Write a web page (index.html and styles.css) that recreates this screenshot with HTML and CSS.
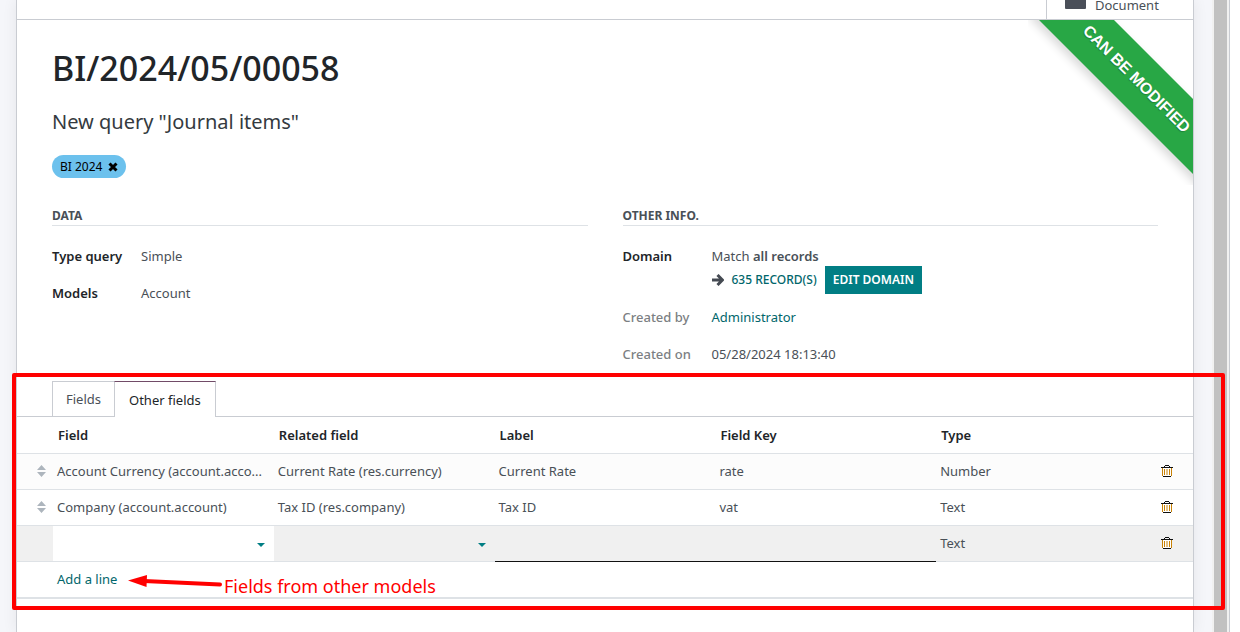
FILE: index.html
```html
<!DOCTYPE html>
<html lang="en">
<head>
<meta charset="utf-8">
<title>BI/2024/05/00058</title>
<link rel="stylesheet" href="styles.css">
</head>
<body>
<svg class="sprite" aria-hidden="true">
  <symbol id="sort" viewBox="0 0 9 12"><path d="M0 5 4.500 0 9 5zM0 7h9L4.500 12z"/></symbol>
  <symbol id="caret" viewBox="0 0 8 4"><path d="M0 0h8L4 4z"/></symbol>
  <symbol id="trash" viewBox="0 0 12 12"><path d="M2 3h8v8H2z" fill="#fff"/><path d="M1 3h1v8H1zM10 3h1v8h-1zM3 4h1v6H3zM5.500 4h1v6h-1zM8 4h1v6H8z" fill="#c98205"/><path d="M0 2h12v1H0zM2 11h8v1H2zM4 0h4v1H4zM3 1h1v1H3zM8 1h1v1H8z" fill="#111"/></symbol>
</svg>
<div class="app">
  <main class="sheet">
    <header class="statbar">
      <button class="stat" type="button">
        <svg class="stat-icon" viewBox="0 0 21 16"><rect width="21" height="16" rx="1"/></svg>
        <span>Document</span>
      </button>
    </header>
    <div class="form">
      <div class="ribbon"><span>CAN BE MODIFIED</span></div>
      <h1>BI/2024/05/00058</h1>
      <p class="subtitle">New query "Journal items"</p>
      <div class="tags">
        <span class="tag">BI 2024
          <button type="button" aria-label="Remove tag"><svg viewBox="0 0 10 10"><path d="M1.500 1.500 8.500 8.500M8.500 1.500 1.500 8.500"/></svg></button>
        </span>
      </div>
      <div class="groups">
        <section class="group">
          <h2>Data</h2>
          <dl>
            <dt>Type query</dt><dd>Simple</dd>
            <dt>Models</dt><dd>Account</dd>
          </dl>
        </section>
        <section class="group">
          <h2>Other info.</h2>
          <dl>
            <dt>Domain</dt>
            <dd class="domain">
              <div>Match <b>all records</b></div>
              <div class="domain-actions">
                <svg class="arrow" viewBox="0 0 12 12"><path d="M0 6h10M5.500 1 10.500 6 5.500 11"/></svg>
                <button class="records" type="button">635 RECORD(S)</button>
                <button class="edit" type="button">EDIT DOMAIN</button>
              </div>
            </dd>
            <dt class="muted">Created by</dt><dd><a href="#">Administrator</a></dd>
            <dt class="muted">Created on</dt><dd>05/28/2024 18:13:40</dd>
          </dl>
        </section>
      </div>
    </div>
    <section class="notebook">
      <div class="tabs" role="tablist">
        <button class="tab" type="button" role="tab">Fields</button>
        <button class="tab active" type="button" role="tab" aria-selected="true">Other fields</button>
      </div>
      <table>
        <colgroup><col class="narrow"><col><col><col><col><col><col class="narrow"></colgroup>
        <thead>
          <tr><th></th><th>Field</th><th>Related field</th><th>Label</th><th>Field Key</th><th>Type</th><th></th></tr>
        </thead>
        <tbody>
          <tr class="odd">
            <td class="handle"><svg><use href="#sort"/></svg></td>
            <td>Account Currency (account.acco...</td><td>Current Rate (res.currency)</td><td>Current Rate</td><td>rate</td><td>Number</td>
            <td><button class="trash" type="button" aria-label="Delete row"><svg><use href="#trash"/></svg></button></td>
          </tr>
          <tr>
            <td class="handle"><svg><use href="#sort"/></svg></td>
            <td>Company (account.account)</td><td>Tax ID (res.company)</td><td>Tax ID</td><td>vat</td><td>Text</td>
            <td><button class="trash" type="button" aria-label="Delete row"><svg><use href="#trash"/></svg></button></td>
          </tr>
          <tr class="editing">
            <td></td>
            <td class="field current"><div class="pick"><select aria-label="Field"><option></option></select><svg><use href="#caret"/></svg></div></td>
            <td class="field"><div class="pick"><select aria-label="Related field"><option></option></select><svg><use href="#caret"/></svg></div></td>
            <td class="field required"><input type="text" aria-label="Label"></td>
            <td class="field required"><input type="text" aria-label="Field Key"></td>
            <td>Text</td>
            <td><button class="trash" type="button" aria-label="Delete row"><svg><use href="#trash"/></svg></button></td>
          </tr>
          <tr class="add"><td></td><td colspan="6"><a href="#">Add a line</a></td></tr>
        </tbody>
      </table>
      <div class="callout"></div>
      <div class="note">
        <svg viewBox="0 0 96 14"><path d="M16 7 92 10.500" stroke="#f00" stroke-width="4" stroke-linecap="round"/><path d="M0 6.500 19 1 18.500 13z" fill="#f00"/></svg>
        <span>Fields from other models</span>
      </div>
    </section>
  </main>
</div>
<div class="scrollbar"></div>
<div class="edge"></div>
</body>
</html>
```
FILE: styles.css
```css
* { box-sizing: border-box; }
body {
  margin: 0;
  display: flex;
  height: 100vh;
  overflow: hidden;
  padding-right: 10px;
  background: #fff;
  color: #495057;
  font: 13px/20px "Noto Sans", "Open Sans", sans-serif;
}
h1, h2, p, dl, dd { margin: 0; }
button, input, select { font: inherit; color: inherit; border: 0; padding: 0; background: none; }
a { color: #01666b; text-decoration: none; }
.sprite { position: absolute; width: 0; height: 0; }

.app { flex: 1; display: flex; min-width: 0; padding: 0 18px 0 16px; background: #f5f6fa; }
.sheet {
  flex: 1;
  min-width: 0;
  background: #fff;
  border: solid #c9ccd2;
  border-width: 0 1px;
  box-shadow: 0 0 14px rgba(0, 0, 0, .07);
}
.scrollbar { width: 17px; background: #c1c1c1; border: solid #f1f1f1; border-width: 0 2px; }
.edge { width: 1px; background: #c9ccd2; }

.statbar { display: flex; justify-content: flex-end; align-items: flex-end; height: 20px; border-bottom: 1px solid #c9ccd2; }
.stat { display: flex; align-items: center; gap: 9px; width: 147px; height: 28px; padding: 0 0 0 18px; border-left: 1px solid #c9ccd2; }
.stat-icon { width: 21px; height: 16px; margin-bottom: 8px; fill: #4a4f59; }

.form { position: relative; padding: 26px 35px 0; }
h1 { font-size: 34px; line-height: 44px; font-weight: 500; color: #212529; }
.subtitle { margin-top: 16px; font-size: 20px; line-height: 32px; color: #343a40; }
.tags { display: flex; margin-top: 17px; }
.tag { display: flex; align-items: center; gap: 6px; height: 23px; padding: 0 8px; border-radius: 12px; background: #6cc1ed; color: #000; font-size: 12px; }
.tag button { display: flex; }
.tag svg { width: 10px; height: 10px; stroke: #000; stroke-width: 3; }

.ribbon { position: absolute; top: 0; right: 0; width: 165px; height: 165px; overflow: hidden; }
.ribbon span {
  position: absolute;
  top: 33px;
  left: -12px;
  width: 240px;
  height: 53px;
  transform: rotate(45deg);
  background: #28a745;
  box-shadow: 0 5px 10px rgba(0, 0, 0, .15);
  color: #fff;
  font: bold 16px/52px "Liberation Sans", sans-serif;
  text-align: center;
  text-shadow: 0 1px 1px rgba(0, 0, 0, .25);
}

.groups { display: grid; grid-template-columns: 1fr 1fr; gap: 35px; margin-top: 28px; }
h2 { font-size: 12px; line-height: 19px; font-weight: 700; text-transform: uppercase; border-bottom: 1px solid #dee2e6; }
dl { display: grid; grid-template-columns: 89px 1fr; row-gap: 17px; margin-top: 20px; }
dt { font-weight: 600; color: #212529; }
dt.muted { font-weight: 500; color: #7c7f83; }
b { font-weight: 600; }
.domain { margin-bottom: -4px; }
.domain-actions { display: flex; align-items: center; }
.arrow { width: 12px; height: 12px; margin-right: 8px; fill: none; stroke: #454a52; stroke-width: 3; }
.records { margin-right: 8px; color: #01666b; font-size: 12px; font-weight: 500; }
.edit { height: 28px; padding: 0 8px; background: #017e84; color: #fff; font-size: 12px; font-weight: 600; }

.notebook { position: relative; margin-top: 17px; }
.tabs { display: flex; padding-left: 35px; border-bottom: 1px solid #c9ccd2; }
.tab { height: 35px; padding: 0 13px; border: solid #c9ccd2; border-width: 1px 0 0 1px; }
.tab.active { height: 36px; padding: 0 14px; margin-bottom: -1px; border-right-width: 1px; border-top-color: #714b67; background: #fff; color: #212529; }

table { width: 100%; table-layout: fixed; border-collapse: collapse; border-bottom: 2px solid #dee2e6; }
.narrow { width: 36px; }
th, td { height: 36px; padding: 0 4px; text-align: left; white-space: nowrap; overflow: hidden; text-overflow: ellipsis; }
th { font-weight: 600; color: #212529; padding: 0 5px; }
tr { border-bottom: 1px solid #dee2e6; }
.odd { background: #fcfcfc; }
.editing { background: #f0f0f0; }
.add td { height: 37px; }
.handle { padding-left: 20px; }
.handle svg { display: block; width: 9px; height: 12px; fill: #adb5bd; }
.trash { display: block; }
.trash svg { display: block; width: 12px; height: 12px; }
.field { padding: 0; }
.field select, .field input { display: block; width: 100%; height: 35px; border-radius: 0; appearance: none; outline: 0; }
.current { background: #fff; }
.required { border-bottom: 1px solid #111; }
.pick { position: relative; }
.pick svg { position: absolute; right: 9px; top: 17px; width: 8px; height: 4px; fill: #017e84; }

.callout { position: absolute; z-index: 1; inset: -8px -32px -11px -5px; border: 4px solid #f00; border-radius: 2px; }
.note { position: absolute; left: 111px; bottom: 1px; display: flex; color: #f00; font-size: 18px; line-height: 24px; }
.note svg { width: 96px; height: 14px; }
```
